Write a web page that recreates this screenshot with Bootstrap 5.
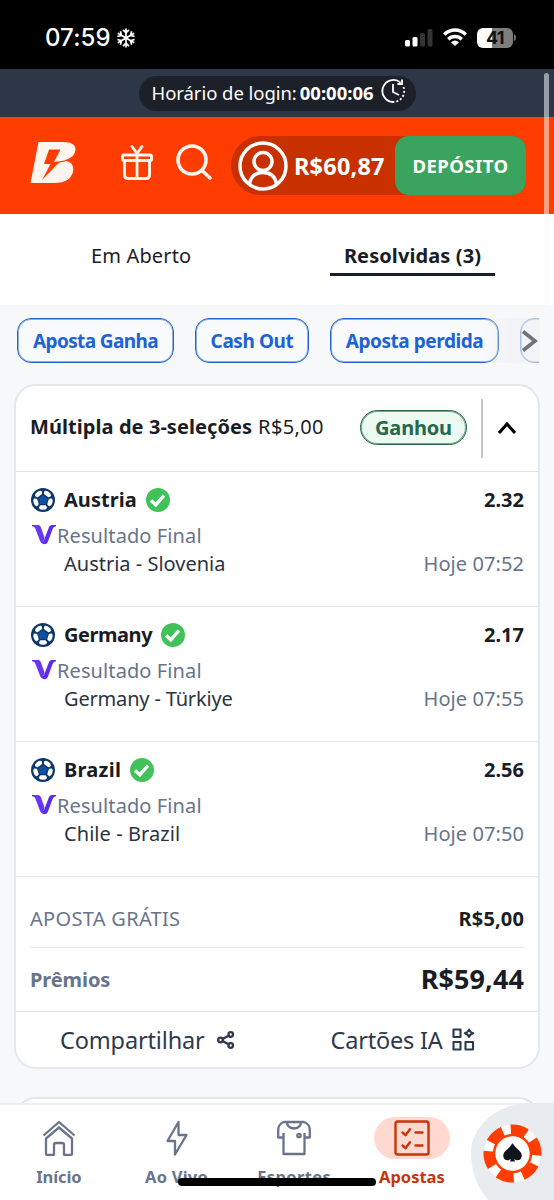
<!DOCTYPE html>
<html lang="pt-BR" class="h-100">
<head>
<meta charset="utf-8">
<meta name="viewport" content="width=device-width, initial-scale=1">
<title>Apostas</title>
<link rel="stylesheet" href="https://cdn.jsdelivr.net/npm/bootstrap@5.3.0/dist/css/bootstrap.min.css">
<style>
body{font-family:"Noto Sans",sans-serif;font-size:20px;line-height:28px;background:#f6f8fa;color:#1a1d24;width:554px;height:1200px;overflow:hidden;position:relative}
svg{display:block;flex:none}
.w7{font-weight:700}
.slate{color:#677489}
.statusbar{height:69px;background:#000;color:#fff;font:500 24px/30px Inter,sans-serif;padding:6px 38px 0 45px}
.clock{letter-spacing:.1px;width:66px}
.battery{width:36px;height:20px;border-radius:6px;background:linear-gradient(90deg,#fff 42%,#7d7d7d 42%);color:#111;font:700 18px/20px Inter,sans-serif;letter-spacing:-.5px}
.loginbar{height:48px;background:#2e3747}
.loginpill{width:277px;height:35px;background:#1c2028;border-radius:18px;color:#fff;font-size:18.5px;padding-left:13px}
.topbar{height:97px;background:#ff3d00;padding-left:30px;padding-right:28px}
.wallet{width:295px;height:59px;border-radius:30px 14px 14px 30px;background:#c93000;color:#fff;padding-left:7px}
.balance{font-size:23.5px;letter-spacing:.2px;margin-left:6px}
.deposit{width:131px;height:59px;border-radius:14px;background:#3aa35e;color:#fff;font-size:18.5px;letter-spacing:.45px}
.tabs{height:91px;background:#fff}
.tab-open{margin-left:91px;letter-spacing:.15px;width:239px;padding-top:28px}
.tab-done{width:165px;height:62px;border-bottom:3px solid #1a1d2b;letter-spacing:.1px;padding-top:28px}
.chips{height:78px;padding:13px 14px 0 17px;position:relative;overflow:hidden}
.chip{height:45px;border:1px solid #2463cf;box-shadow:inset 0 0 0 1px rgba(36,99,207,.5);border-radius:14px;color:#1d62d6;background:#f8fafc;font-size:19px}
.chipcut{margin-left:21px;width:19px}
.chipfade{position:absolute;left:480px;top:13px;width:60px;height:45px;background:linear-gradient(90deg,rgba(238,240,243,0),rgba(238,240,243,.65) 60%)}
.slip{margin:1px 14px 0;height:685px;border:2px solid #e4e7eb;border-radius:22px;background:#fff;overflow:hidden}
.sliphead{height:86px;border-bottom:1px solid #dfe2e8;padding:0 21px 2px 14px}
.won{width:107px;height:35px;border:1px solid #25694a;box-shadow:inset 0 0 0 1px rgba(37,105,74,.6);border-radius:18px;background:#ecfaf1;color:#25694a;letter-spacing:-.19px}
.vline{width:2px;height:59px;background:#c1c3ce;margin:1px 14px 0 14px}
.leg{height:135px;padding:14px 14px 0 14px;border-bottom:1px solid #e2e6ec}
.legname{height:28px;margin-bottom:8px}
.team{margin:0 9px 0 8px}
.match{color:#2b3340;padding-left:34px}
.sumrow{margin:0 14px}
.bet{height:71px;padding-top:28px;border-bottom:1px solid #e2e6ec}
.prize{border-bottom:1px solid #dfe3e9}
.prize .sumrow{height:63px}
.total{font-size:27px;letter-spacing:.1px}
.actions{height:56px;font-size:23.5px;color:#2e3a4c}
.nextslip{margin:28px 14px 0;height:60px;border:2px solid #e1e4e9;border-radius:22px;background:#fff}
.bottomnav{position:absolute;left:0;top:1103px;width:554px;height:97px;background:#fff;border-top:2px solid #eceef1;color:#677489;font-size:16.5px;line-height:22px}
.tabitem{width:117.7px;padding-top:12px}
.iconbox{width:76px;height:42px;border-radius:21px;margin-bottom:7px}
.current{color:#c83408}
.current .iconbox{background:#ffd9cf}
.chipdock{position:absolute;left:471px;top:-2px;width:83px;height:112px;background:#e9ecef;border-radius:60px 0 0 50px / 50px 0 0 62px;padding:21px 0 0 12px}
.homebar{position:absolute;left:178px;top:1178px;width:198px;height:8px;border-radius:4px;background:#000}
.scrollthumb{position:absolute;left:543.5px;top:73px;width:5px;height:241px;border-radius:3px;background:rgba(250,250,250,.52)}
</style>
</head>
<body>
<svg class="d-none">
  <symbol id="ball" viewBox="0 0 24 24"><circle cx="12" cy="12" r="12" fill="#0d3768"/><path d="M12 7.200l4.700 3.400-1.800 5.500H9.100l-1.800-5.500z" fill="#0d50a4"/><g fill="#fff"><path id="patch" d="M9.700 17.300h4.600q.5 0 .8.500l.9 1.600q.3.500-.1.900-.9 1.500-3.900 1.500t-3.900-1.500q-.4-.4-.1-.9l.9-1.600q.3-.5.800-.5z"/><use href="#patch" transform="rotate(72 12 12)"/><use href="#patch" transform="rotate(144 12 12)"/><use href="#patch" transform="rotate(216 12 12)"/><use href="#patch" transform="rotate(288 12 12)"/></g></symbol>
  <symbol id="ok" viewBox="0 0 24 24"><circle cx="12" cy="12" r="12" fill="#41c159"/><path d="M5 12.500l4.800 4.300L18 7.500" fill="none" stroke="#fff" stroke-width="3.400"/></symbol>
  <symbol id="vmark" viewBox="0 0 24 20"><path d="M0 0h6Q8 0 8.800 2l3.700 10.500L10.800 18.300Q9 18.300 8.300 16.600L3.400 3.800Q2.900 1.600 0 1.300z" fill="#6a35f4"/><path d="M24 0h-4q-2.200 0-3 2L11.800 15.600q-.9 1.500-2.300 1.700.8 1.900 3 1.900t3.300-2.300L20.500 4.300q1-2.900 3.500-3z" fill="#5b2cf0"/></symbol>
</svg>

<header>
  <div class="statusbar d-flex align-items-center">
    <span class="clock">07:59</span>
    <svg style="margin-left:5px" width="20" height="20" viewBox="0 0 20 20" fill="none" stroke="#fff" stroke-width="1.700"><g id="arm"><path d="M10 10V.5M7 1.800l3 3 3-3M10 10v9.500M7 18.200l3-3 3 3"/></g><use href="#arm" transform="rotate(60 10 10)"/><use href="#arm" transform="rotate(120 10 10)"/></svg>
    <svg class="ms-auto" width="28" height="18" viewBox="0 0 28 18"><rect y="11" width="5" height="6.500" rx="1.500" fill="#fff"/><rect x="7.500" y="8" width="5" height="9.500" rx="1.500" fill="#fff"/><rect x="15" y="4" width="5" height="13.500" rx="1.500" fill="#333"/><rect x="22.500" y="0" width="5" height="17.500" rx="1.500" fill="#333"/></svg>
    <svg width="24" height="18" viewBox="0 0 24 18" fill="none" stroke="#fff" stroke-width="3.500" style="margin:-2px 10px 0 10px"><path d="M1.200 6.600Q6 2 12 2t10.800 4.600M5.200 11.200Q8.100 8.500 12 8.500t6.800 2.700"/><path d="M8 14.200Q12 11 16 14.200L12 18z" fill="#fff" stroke="none"/></svg>
    <span class="battery text-center">41</span><svg width="3" height="7" viewBox="0 0 3 7"><path d="M1 0q2 1 2 3.500T1 7z" fill="#7d7d7d"/></svg>
  </div>
  <div class="loginbar d-flex align-items-center justify-content-center">
    <div class="loginpill d-flex align-items-center">
      <span style="letter-spacing:-.05px">Horário de login:</span><span class="w7" style="margin-left:3px">00:00:06</span>
      <svg style="margin:-4px 0 0 6px" width="26" height="26" viewBox="0 0 26 26" fill="none" stroke="#fff" stroke-width="1.800"><path d="M13 24A11 11 0 1 1 20.500 4.600"/><path d="M13 6v8l6 3M22 1.500V6h-4.500"/><path d="M23.500 9a11 11 0 0 1-10.500 15" stroke-dasharray="2 2"/></svg>
    </div>
  </div>
  <nav class="topbar d-flex align-items-center">
    <svg style="margin-top:-6px" width="46" height="42" viewBox="0 0 46 42"><path fill="#fff5ef" fill-rule="evenodd" d="M8.500 0H33Q45.500 0 45.500 7.500 45 15.500 35 18.500 43.500 20 43.300 27.500 42 41 24 41H0.500zM19 7.500 14 22h6.500L12 38l17.500-18H24l6.500-12.500z"/><path d="M25.500 20.300q9.500-.3 16.500-4.800" stroke="#ff3d00" stroke-width="1.300" fill="none"/></svg>
    <svg style="margin:-8px 0 0 45px" width="32" height="36" viewBox="0 0 32 36" fill="none" stroke="#fff5ef" stroke-width="2.900" stroke-linecap="round" stroke-linejoin="round"><rect x="1.500" y="11" width="29" height="5.500" rx="1.500"/><path d="M3.500 16.500V31q0 3.500 3.500 3.500h18q3.500 0 3.500-3.500V16.500M16 9.500V34M11 2.500l5 7 5-7"/></svg>
    <svg style="margin:-6px 0 0 23px" width="37" height="37" viewBox="0 0 37 37" fill="none" stroke="#fff5ef" stroke-width="3.600" stroke-linecap="round"><circle cx="16" cy="16" r="14"/><path d="M26 26.500l8 7.500"/></svg>
    <div class="wallet ms-auto d-flex align-items-center">
      <svg width="50" height="50" viewBox="0 0 50 50" fill="none" stroke="#fff" stroke-width="3.500"><circle cx="25" cy="25" r="23"/><circle cx="25" cy="20.500" r="9"/><path d="M11.500 43Q13.500 31.500 25 31.500T38.500 43"/></svg>
      <span class="balance w7">R$60,87</span>
      <span class="deposit w7 ms-auto d-flex align-items-center justify-content-center">DEPÓSITO</span>
    </div>
  </nav>
  <div class="tabs d-flex">
    <span class="tab-open">Em Aberto</span>
    <span class="tab-done w7 text-center">Resolvidas (3)</span>
  </div>
</header>

<main>
  <div class="chips d-flex">
    <span class="chip w7 d-flex flex-shrink-0 align-items-center justify-content-center" style="width:157px;letter-spacing:-.6px">Aposta Ganha</span>
    <span class="chip w7 d-flex flex-shrink-0 align-items-center justify-content-center" style="width:114px;margin-left:21px;letter-spacing:-.4px">Cash Out</span>
    <span class="chip w7 d-flex flex-shrink-0 align-items-center justify-content-center" style="width:169px;margin-left:21px;letter-spacing:-.45px">Aposta perdida</span>
    <span class="chipcut overflow-hidden"><span class="chip d-block" style="width:90px"></span></span>
    <div class="chipfade d-flex align-items-center justify-content-end"><svg style="margin-right:2px" width="18" height="22" viewBox="0 0 18 22" fill="none" stroke="#6c747d" stroke-width="3.600"><path d="M3 1.500 15 11 3 20.500"/></svg></div>
  </div>

  <section class="slip">
    <div class="sliphead d-flex align-items-center">
      <span class="w7" style="margin-top:-2px;letter-spacing:.07px">Múltipla de 3-seleções</span><span style="margin:-2px 0 0 6px;letter-spacing:.35px">R$5,00</span>
      <span class="won w7 ms-auto d-flex align-items-center justify-content-center">Ganhou</span>
      <span class="vline"></span>
      <svg width="20" height="14" viewBox="0 0 20 14" fill="none" stroke="#000" stroke-width="3"><path d="M2 12l8-9 8 9"/></svg>
    </div>

    <div class="leg">
      <div class="legname d-flex align-items-center"><svg width="26" height="24"><use href="#ball" width="24" x="1"/></svg><span class="team w7" style="letter-spacing:.03px">Austria</span><svg width="24" height="24"><use href="#ok"/></svg><span class="w7 ms-auto">2.32</span></div>
      <div class="slate d-flex"><svg style="margin:3px 1px 0 2px" width="24" height="20"><use href="#vmark"/></svg><span style="letter-spacing:.1px">Resultado Final</span></div>
      <div class="d-flex justify-content-between"><span class="match">Austria - Slovenia</span><span class="slate" style="letter-spacing:.08px">Hoje 07:52</span></div>
    </div>
    <div class="leg">
      <div class="legname d-flex align-items-center"><svg width="26" height="24"><use href="#ball" width="24" x="1"/></svg><span class="team w7" style="letter-spacing:-.45px">Germany</span><svg width="24" height="24"><use href="#ok"/></svg><span class="w7 ms-auto">2.17</span></div>
      <div class="slate d-flex"><svg style="margin:3px 1px 0 2px" width="24" height="20"><use href="#vmark"/></svg><span style="letter-spacing:.1px">Resultado Final</span></div>
      <div class="d-flex justify-content-between"><span class="match" style="letter-spacing:-.17px">Germany - Türkiye</span><span class="slate" style="letter-spacing:.08px">Hoje 07:55</span></div>
    </div>
    <div class="leg">
      <div class="legname d-flex align-items-center"><svg width="26" height="24"><use href="#ball" width="24" x="1"/></svg><span class="team w7" style="letter-spacing:.25px">Brazil</span><svg width="24" height="24"><use href="#ok"/></svg><span class="w7 ms-auto">2.56</span></div>
      <div class="slate d-flex"><svg style="margin:3px 1px 0 2px" width="24" height="20"><use href="#vmark"/></svg><span style="letter-spacing:.1px">Resultado Final</span></div>
      <div class="d-flex justify-content-between"><span class="match" style="letter-spacing:.07px">Chile - Brazil</span><span class="slate" style="letter-spacing:.08px">Hoje 07:50</span></div>
    </div>

    <div class="sumrow bet d-flex justify-content-between">
      <span class="slate" style="letter-spacing:.3px">APOSTA GRÁTIS</span><span class="w7" style="letter-spacing:.15px">R$5,00</span>
    </div>
    <div class="prize">
      <div class="sumrow d-flex align-items-center justify-content-between">
        <span class="slate w7" style="letter-spacing:-.1px">Prêmios</span><span class="w7 total" style="margin-top:-2px">R$59,44</span>
      </div>
    </div>
    <div class="actions d-flex align-items-center">
      <span style="margin-left:44px;letter-spacing:-.15px">Compartilhar</span>
      <svg style="margin-left:12px" width="18" height="18" viewBox="0 0 18 18" fill="none" stroke="#2e3a4c" stroke-width="2.300"><circle cx="3.500" cy="9" r="2.300"/><circle cx="13.700" cy="3.500" r="2.300"/><circle cx="13.700" cy="14.500" r="2.300"/><path d="M5.600 7.900l6-3.200M5.600 10.100l6 3.200"/></svg>
      <span style="margin-left:96px;letter-spacing:-.2px">Cartões IA</span>
      <svg style="margin:-1px 0 0 9px" width="23" height="23" viewBox="0 0 23 23" fill="none" stroke="#2e3a4c" stroke-width="2.100" stroke-linejoin="round"><rect x="1.500" y="1.500" width="7" height="7.500"/><rect x="1.500" y="14" width="7" height="7.500"/><rect x="13.500" y="14" width="7.500" height="7.500"/><path d="M17 1.500q.9 2.800 4.200 3.700-3.300.9-4.200 3.700-.9-2.800-4.200-3.700 3.300-.9 4.200-3.700z"/></svg>
    </div>
  </section>
  <section class="nextslip"></section>
</main>

<nav class="bottomnav d-flex w7">
  <div class="tabitem d-flex flex-column align-items-center"><span class="iconbox d-flex align-items-center justify-content-center"><svg width="34" height="36" viewBox="0 0 34 36" fill="none" stroke="#677489" stroke-width="2.300" stroke-linejoin="round"><path d="M1.500 15.500 17 2l15.500 13.500"/><path d="M4 18.500V34q0 .8.800.8H12V25q0-2 2-2h6q2 0 2 2v9.800h7.200q.8 0 .8-.8V18.500L17 7.500z"/></svg></span><span style="letter-spacing:-.1px">Início</span></div>
  <div class="tabitem d-flex flex-column align-items-center"><span class="iconbox d-flex align-items-center justify-content-center"><svg width="22" height="36" viewBox="0 0 22 36" fill="none" stroke="#677489" stroke-width="2.300" stroke-linejoin="round"><path d="M12.500 2v12.500q0 .5.500.5h7.500L9 34.500V21H1.500z"/></svg></span><span style="letter-spacing:.2px">Ao Vivo</span></div>
  <div class="tabitem d-flex flex-column align-items-center"><span class="iconbox d-flex align-items-center justify-content-center"><svg width="34" height="36" viewBox="0 0 34 36" fill="none" stroke="#677489" stroke-width="2.300" stroke-linejoin="round"><path d="M10 2H7Q1.200 4 1.200 10v7.500h5.300V13M24 2h3q5.800 2 5.800 8v7.500h-5.300V13M6.500 13v21h21V13M10 2h14q0 6-7 6.500Q10 8 10 2z"/><circle cx="22" cy="15.500" r="1.700"/></svg></span><span style="letter-spacing:.4px">Esportes</span></div>
  <div class="tabitem current d-flex flex-column align-items-center"><span class="iconbox d-flex align-items-center justify-content-center"><svg width="36" height="36" viewBox="0 0 36 36" fill="none" stroke="#c83408" stroke-width="2.400" stroke-linecap="round" stroke-linejoin="round"><rect x="1.500" y="1.500" width="33" height="33" rx="2"/><path d="M8.500 12.500l3 2.700 4.500-6M21.500 12.500h7M8.500 25.500l3 2.700 4.500-6M21.500 25.500h7"/></svg></span><span>Apostas</span></div>
  <div class="chipdock"><svg width="59" height="59" viewBox="0 0 60 60"><circle cx="30" cy="30" r="29" fill="#fff"/><circle cx="30" cy="30" r="23.500" fill="none" stroke="#ff3d00" stroke-width="12" stroke-dasharray="15.600 9.009" transform="rotate(-94 30 30)"/><circle cx="30" cy="30" r="18.500" fill="none" stroke="#ff3d00" stroke-width="3"/><circle cx="30" cy="30" r="17.500" fill="#fff"/><path fill="#10151d" d="M30 19.500q3 4.500 7 7.800 3 2.700 2.300 6-.8 3.600-4.300 3.600-1.700 0-3.300-1.200l.8 2.500h-5l.8-2.500Q26.700 36.900 25 36.900q-3.500 0-4.300-3.600-.7-3.300 2.300-6 4-3.300 7-7.800z"/></svg></div>
</nav>
<div class="homebar"></div>
<div class="scrollthumb"></div>
<script src="https://cdn.jsdelivr.net/npm/bootstrap@5.3.0/dist/js/bootstrap.bundle.min.js"></script>
</body>
</html>
